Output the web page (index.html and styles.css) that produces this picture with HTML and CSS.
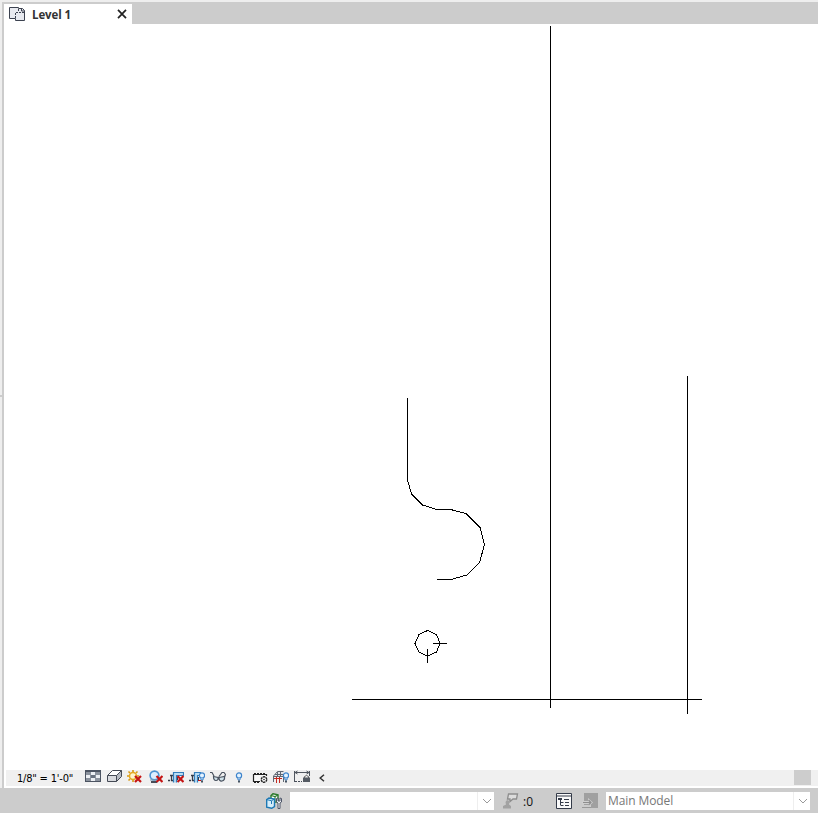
FILE: index.html
```html
<!DOCTYPE html>
<html lang="en">
<head>
    <meta charset="UTF-8" />
    <title>Level 1</title>
    <link rel="stylesheet" href="styles.css">
</head>
<body>
    <div class="workspace">
        <div class="splitter"></div>
        <main class="view">
            <!-- view tabs -->
            <div class="tab-bar">
                <div class="tab">
                    <svg class="tab-icon" width="16" height="14" viewBox="0 0 16 14">
                        <path d="M.5.5h9v1h4l2 2v10h-9v-2h-6z" fill="#e8eaf0" stroke="#3c4250"/>
                        <path d="M6.5 11V5.5H15M9.5 2v3" fill="none" stroke="#3c4250" stroke-dasharray="2 1"/>
                        <path d="M12.5 1.500v2.500h3" fill="none" stroke="#3c4250"/>
                    </svg>
                    <span class="tab-title">Level 1</span>
                    <svg class="tab-close" width="10" height="10" viewBox="0 0 10 10">
                        <path d="M1 .8l8 8.4M9 .8L1 9.2" stroke="#222" stroke-width="1.7"/>
                    </svg>
                </div>
            </div>

            <!-- drawing area -->
            <svg class="drawing" width="814" height="745" viewBox="4 24 814 745" shape-rendering="crispEdges">
                <path d="M550.5 26v682M687.5 376v338M352 699.5h350"/>
                <path d="M407.5 398v82l4 14 11 11 14 4.500h14l15.500 4 14 14 4.500 17-5 18-12.500 12.500-16 4.500h-14"/>
                <path d="M427.5 630.5l9 4 3.5 9-3.5 8.500-9 4-8.500-4-4-8.500 4-9zM433 643.500h14M427.500 649v13.500"/>
            </svg>

            <!-- view control bar -->
            <div class="view-controls">
                <span class="scale">1/8" = 1'-0"</span>
                <div class="icons">
                    <svg viewBox="0 0 16 16" shape-rendering="crispEdges">
                        <path d="M0 1h16v12H0z" fill="#4b5361"/>
                        <path d="M1 3h14v9H1z" fill="#8b929d"/>
                        <path d="M6 3h4v3H6zM1 6h4v3H1zM11 6h4v3h-4zM6 9h4v3H6z" fill="#eceff3"/>
                        <path d="M6 6h4v3H6z" fill="#68717f"/>
                    </svg>
                    <svg viewBox="0 0 16 16">
                        <path d="M1.500 6.500l5-5h9v6l-5 5h-9z" fill="#fff"/>
                        <path d="M1.500 6.500h9v6h-9z" fill="#d8dade"/>
                        <path d="M10.500 6.500l5-5v6l-5 5z" fill="#b6bac2"/>
                        <path d="M1.500 6.500l5-5h9v6l-5 5h-9zh9v6M10.500 6.500l5-5" fill="none" stroke="#444a55"/>
                    </svg>
                    <svg class="sun" viewBox="0 0 16 16">
                        <path d="M7 1v2M1 7h2M2.500 2.500L4 4M11.500 2.500L10 4M2.500 11.500L4 10M7 11v2M11 7h2" stroke="#d89a16" stroke-width="1.600"/>
                        <circle cx="7" cy="7" r="3.500" fill="#fff6cc" stroke="#e5a922" stroke-width="1.500"/>
                        <path d="M9 7l6 6M15 7l-6 6" stroke="#c41414" stroke-width="2.200"/>
                    </svg>
                    <svg viewBox="0 0 16 16">
                        <path d="M4 13h6" stroke="#333c48" stroke-width="1.800"/>
                        <circle cx="7.500" cy="6.500" r="4.400" fill="#dceeff" stroke="#4b93d2" stroke-width="1.600"/>
                        <path d="M3 11h6" stroke="#7f99ae"/>
                        <path d="M9.500 7l6 6M15.500 7l-6 6" stroke="#c41414" stroke-width="2.200"/>
                    </svg>
                    <svg viewBox="0 0 16 16">
                        <path d="M0 11.500h2M3 11.500h2M3.500 6v6M2 6.500h3" fill="none" stroke="#343b48" stroke-width="1.300"/>
                        <path d="M5.500 13.500V3.500h10v3h-7v7" fill="#b9ddf4" stroke="#327dba" stroke-width="1.200"/>
                        <path d="M9.500 8v3" stroke="#343b48"/>
                        <path d="M9.500 7l6 6M15.500 7l-6 6" stroke="#c41414" stroke-width="2.200"/>
                    </svg>
                    <svg viewBox="0 0 16 16">
                        <path d="M0 11.500h2M3 11.500h2M3.500 6v6M2 6.500h3" fill="none" stroke="#343b48" stroke-width="1.300"/>
                        <path d="M5.500 13.500V3.500h6v3h-3v7" fill="#b9ddf4" stroke="#327dba" stroke-width="1.200"/>
                        <path d="M9.500 8v3" stroke="#343b48"/>
                        <path d="M9 11.500h3" stroke="#c41414"/>
                        <circle cx="13" cy="6.500" r="2.600" fill="#e4f3ff" stroke="#3d84cc" stroke-width="1.200"/>
                        <path d="M12 9v2h2V9" fill="#e4f3ff" stroke="#3d84cc"/>
                        <path d="M12 12.500h2" stroke="#465360" stroke-width="2"/>
                    </svg>
                    <svg viewBox="0 0 16 16">
                        <path d="M0 3.500h2L4 7M8 8.500L9.500 8M14.500 8l1-2.500L14 3.500h-2L9 7.500" fill="none" stroke="#48515e" stroke-width="1.200"/>
                        <path d="M3.500 7.500L8 8.500q.5 3-2 3T3.500 7.500zM9 8.500l5.500-1q.5 4-2.500 4.500T9 8.500z" fill="#cfe2ea" stroke="#48515e" stroke-width="1.200"/>
                    </svg>
                    <svg viewBox="0 0 16 16">
                        <circle cx="8" cy="6.500" r="2.600" fill="#e4f3ff" stroke="#3d84cc" stroke-width="1.200"/>
                        <path d="M7 9v2h2V9" fill="#e4f3ff" stroke="#3d84cc"/>
                        <path d="M7 12.500h2" stroke="#465360" stroke-width="2"/>
                    </svg>
                    <svg viewBox="0 0 16 16">
                        <path d="M1.500 5.500h13v7h-13z" fill="#f8f8f8" stroke="#222" stroke-width="1.200"/>
                        <path d="M2 4.500h12M2 13.500h6" stroke="#222" stroke-dasharray="2 1"/>
                        <path d="M8 7h8v7H8z" fill="#f0f0f0"/>
                        <circle cx="12" cy="10.500" r="2.700" fill="#fff" stroke="#222" stroke-width="1.400" stroke-dasharray="2.300 .5"/>
                        <circle cx="12" cy="10.500" r=".8" fill="#222"/>
                    </svg>
                    <svg viewBox="0 0 16 16">
                        <path d="M1 7l4-4h6v4.500H1z" fill="#e3e5e9"/>
                        <path d="M.5 13V7l4-4.500h6M4.500 3v4M7.500 2.500v5M1 7.500h9M2 5.500h9M10.500 7v6" fill="none" stroke="#606873"/>
                        <path d="M3.500 14V8M6.500 14V8M1 9.500h8" fill="none" stroke="#c62b22"/>
                        <circle cx="13" cy="6.500" r="2.600" fill="#e4f3ff" stroke="#3d84cc" stroke-width="1.200"/>
                        <path d="M12 9v2h2V9" fill="#e4f3ff" stroke="#3d84cc"/>
                        <path d="M12 12.500h2" stroke="#465360" stroke-width="2"/>
                    </svg>
                    <svg viewBox="0 0 16 16">
                        <path d="M.5 2v11M15.500 2v5M1 3.500h14M3.500 2L1 3.500 3.500 5M12.500 2L15 3.500 12.500 5" fill="none" stroke="#50565f"/>
                        <path d="M1 12.500h7" stroke="#454c57" stroke-dasharray="2 1"/>
                        <path d="M10.500 9V7.500q2-2 4 0V9" fill="none" stroke="#666"/>
                        <path d="M9 8.500h7V13H9z" fill="#555b63"/>
                    </svg>
                </div>
                <svg class="collapse" width="6" height="8" viewBox="0 0 6 8">
                    <path d="M5 .7L1.200 4 5 7.300" fill="none" stroke="#333" stroke-width="1.500"/>
                </svg>
                <div class="scroll-thumb"></div>
            </div>
        </main>
    </div>

    <!-- status bar -->
    <footer class="status-bar">
        <svg class="worksets" width="16" height="16" viewBox="0 0 16 16">
            <path d="M5 2.500L7 .7l5 1V9H5z" fill="#fff" stroke="#2c7a2c" stroke-width="1.400"/>
            <path d="M5 2.500l4 1L12 2M9 3.500V8" fill="none" stroke="#2c7a2c" stroke-width="1.200"/>
            <path d="M.7 6.500L3 5l5.500 1v7.500l-2.800 1.800-5-1z" fill="#d5edfa" stroke="#1d78b4" stroke-width="1.400"/>
            <path d="M1 6.700l4.500 1L8.200 6.200M5.500 8v3" fill="none" stroke="#1d78b4"/>
            <path d="M10.500 5.500v3.500l1.500 1v5.500h2V10l1.500-1V5.500L14 5v3h-2V5z" fill="#eef0f3" stroke="#4c5568"/>
        </svg>
        <div class="combo">
            <span class="value"></span>
            <svg width="10" height="6" viewBox="0 0 10 6"><path d="M1 1l4 4 4-4"/></svg>
        </div>
        <svg class="requests" width="16" height="16" viewBox="0 0 16 16">
            <path d="M5.500 1h9l-1 5H10l-3 2.500V6H4.500z" fill="#dcdcdc" stroke="#8d8d8d" stroke-width="1.300"/>
            <path d="M0 15.500V13l3-1.500L2.500 9 4 7l2.500 1L6 11.500l2 1.500v2.500z" fill="#a2a2a2"/>
        </svg>
        <span class="count">:0</span>
        <svg class="options" width="16" height="16" viewBox="0 0 16 16">
            <path d="M.5.5h15v15H.5z" fill="#fafafa" stroke="#343b49"/>
            <path d="M1 3h14" stroke="#343b49"/>
            <path d="M2 5h4v2H2z" fill="#343b49"/>
            <path d="M8 6.500h5M9 9.500h4M9 12.500h4M4.500 7v5.500M5 9.500h2.500M5 12.500h2.500" fill="none" stroke="#343b49"/>
        </svg>
        <svg class="add-option" width="16" height="16" viewBox="0 0 16 16">
            <path d="M2 0h14v15H9v-3H2z" fill="#a0a0a0"/>
            <path d="M0 8h6V5l5 4.500L6 14v-3H0z" fill="#d0d0d0"/>
            <path d="M1 9.500h8M6.500 7L9 9.500 6.500 12" fill="none" stroke="#8e8e8e" stroke-width="1.200"/>
            <path d="M0 14.500h9" stroke="#999"/>
        </svg>
        <div class="combo">
            <span class="value">Main Model</span>
            <svg width="10" height="6" viewBox="0 0 10 6"><path d="M1 1l4 4 4-4"/></svg>
        </div>
    </footer>
</body>
</html>
```
FILE: styles.css
```css
* {
    margin: 0;
    padding: 0;
    box-sizing: border-box;
}

body {
    width: 818px;
    height: 813px;
    overflow: hidden;
    display: flex;
    flex-direction: column;
    font-family: "Open Sans", "Noto Sans", sans-serif;
    font-size: 12px;
    background: #fff;
    border-top: 2px solid #eee;
}

svg {
    display: block;
    flex: none;
}

.workspace {
    display: flex;
    height: 786px;
}

.splitter {
    width: 4px;
    background: linear-gradient(#ccc, #ccc) 0 393px / 2px 2px no-repeat #eee;
    border-right: 2px solid #ccc;
}

.view {
    flex: 1;
    display: flex;
    flex-direction: column;
}

.tab-bar {
    height: 22px;
    padding-top: 2px;
    background: #ccc;
}

.tab {
    display: flex;
    align-items: center;
    width: 128px;
    height: 20px;
    padding: 0 5px;
    background: #fff;
}

.tab-title {
    margin-left: 7px;
    padding-top: 2px;
    font-size: 11.5px;
    font-weight: 700;
    letter-spacing: -0.1px;
    color: #333;
    line-height: 20px;
}

.tab-close {
    margin-left: auto;
}

.drawing {
    height: 745px;
}

.drawing path {
    fill: none;
    stroke: #000;
    stroke-width: 1;
}

.view-controls {
    display: flex;
    align-items: center;
    height: 16px;
    margin: 1px 0 2px 2px;
    padding-right: 7px;
    background: #f0f0f0;
}

.scale {
    width: 79px;
    padding-left: 11px;
    font-family: "DejaVu Sans Condensed", "DejaVu Sans", sans-serif;
    font-size: 11px;
    letter-spacing: -0.2px;
    line-height: 16px;
    padding-top: 1px;
    white-space: nowrap;
    color: #000;
}

.icons {
    display: flex;
    gap: 5px;
}

.icons svg {
    width: 16px;
    height: 16px;
    margin-top: -2px;
}

.icons .sun {
    margin-left: -1px;
}

.collapse {
    margin-left: 9px;
}

.scroll-thumb {
    width: 17px;
    height: 15px;
    margin-left: auto;
    margin-bottom: 1px;
    background: #cdcdcd;
}

.status-bar {
    display: flex;
    align-items: center;
    height: 25px;
    padding-left: 266px;
    background: #ccc;
}

.combo {
    display: flex;
    align-items: center;
    width: 204px;
    height: 18px;
    padding-right: 2px;
    background: #fff;
}

.combo .value {
    flex: 1;
    height: 18px;
    margin-right: 4px;
    padding-left: 2px;
    border-right: 1px solid #eee;
    line-height: 18px;
    letter-spacing: -0.1px;
    color: #777;
}

.combo path {
    fill: none;
    stroke: #999;
}

.worksets {
    margin-right: 8px;
}

.requests {
    margin-left: 9px;
}

.count {
    width: 33px;
    margin-left: 4px;
    padding-top: 1px;
    font-size: 12px;
    color: #111;
}

.add-option {
    margin: 0 8px 0 10px;
}
```
